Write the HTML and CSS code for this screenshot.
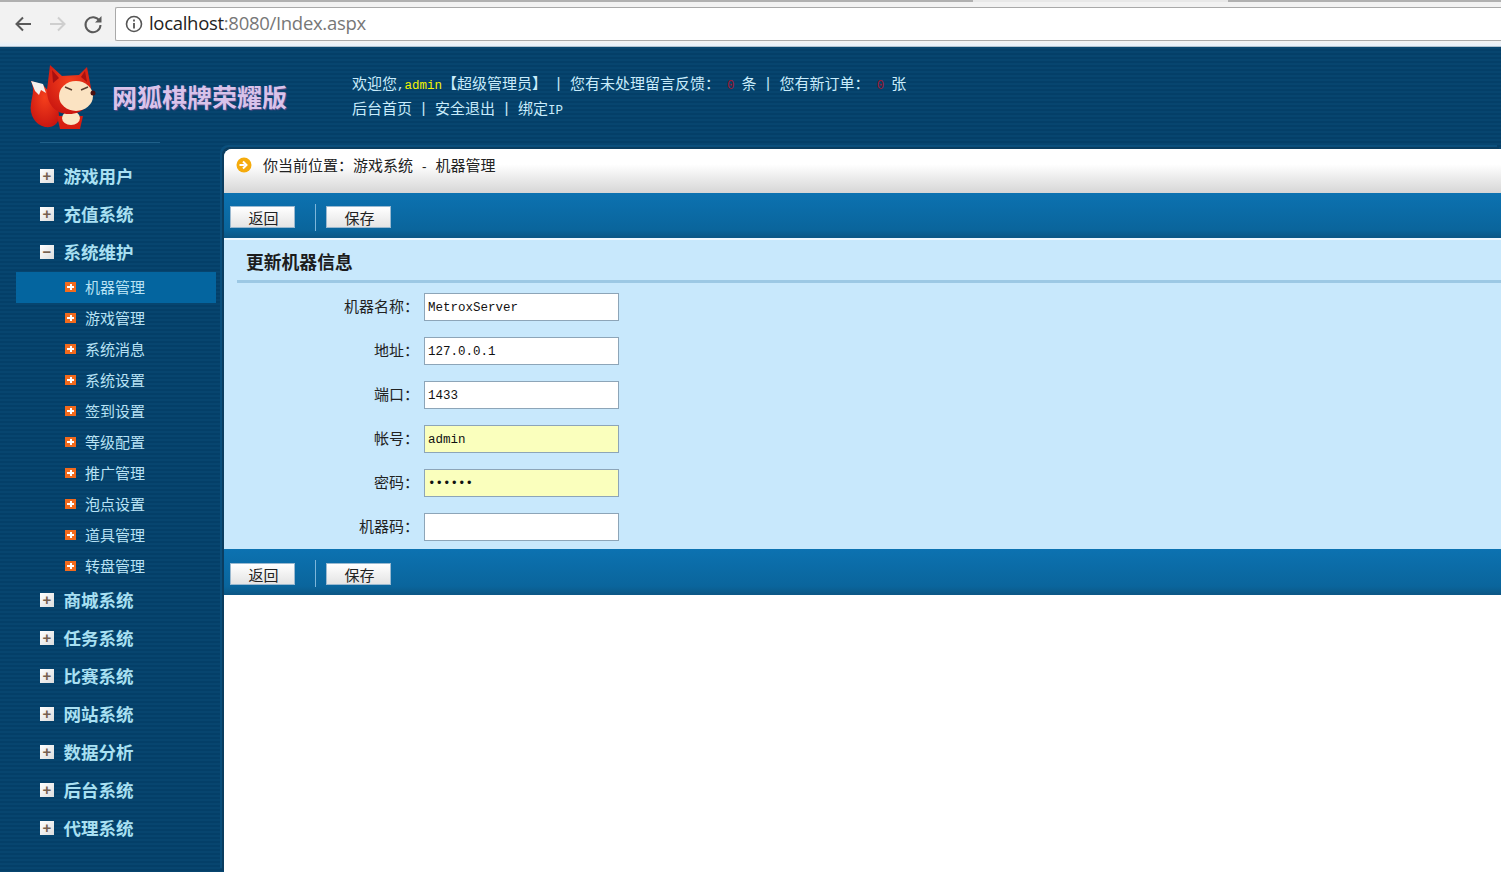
FILE: index.html
```html
<!DOCTYPE html>
<html lang="zh-CN">
<head>
<meta charset="utf-8">
<title>网狐棋牌荣耀版</title>
<link rel="stylesheet" href="styles.css">
</head>
<body>
<div class="browser">
  <div class="tabstrip"></div>
  <div class="navbar">
    <svg class="nav-icon" width="24" height="24" viewBox="0 0 24 24"><path d="M20 12H6M12 5.500 5.500 12l6.500 6.500" fill="none" stroke="#5a5a5a" stroke-width="2"/></svg>
    <svg class="nav-icon" width="24" height="24" viewBox="0 0 24 24"><path d="M4 12h14M12 5.500l6.500 6.500-6.500 6.500" fill="none" stroke="#cfcfcf" stroke-width="2"/></svg>
    <svg class="nav-icon" width="24" height="24" viewBox="0 0 24 24"><path d="M18.500 9A7.500 7.500 0 1 0 19.500 13" fill="none" stroke="#5a5a5a" stroke-width="2"/><path d="M20.500 4v6.500H14z" fill="#5a5a5a"/></svg>
    <div class="urlbox">
      <svg width="18" height="18" viewBox="0 0 18 18"><circle cx="9" cy="9" r="7.500" fill="none" stroke="#555" stroke-width="1.600"/><path d="M9 8v5.500M9 4.500v2" stroke="#555" stroke-width="1.800"/></svg>
      <span class="url"><span class="url-host">localhost</span>:8080/Index.aspx</span>
    </div>
  </div>
  <div class="navshade"></div>
</div>
<div class="app">
  <header class="top">
    <div class="brand">
      <svg class="fox" width="80" height="76" viewBox="0 0 80 76">
        <defs>
          <radialGradient id="hood" cx="0.5" cy="0.35" r="0.7"><stop offset="0" stop-color="#f5401c"/><stop offset="1" stop-color="#c81410"/></radialGradient>
        </defs>
        <path d="M6 23 18 27C24 34 34 44 34 58 34 66 28 70 20 69 10 67 4 56 6 46 7 38 10 32 6 23Z" fill="url(#hood)"/>
        <path d="M6 23 18 26 21 35 16 32 14 37 10 33Z" fill="#f4f0ec"/>
        <path d="M32 58h26l-3 13H35Z" fill="#d81e10"/>
        <ellipse cx="46" cy="60" rx="9" ry="7" fill="#fbe6c4"/>
        <path d="M25 7 37 18 54 17 62 9 66 30C68 46 58 56 44 56 30 56 22 46 22 32Z" fill="url(#hood)"/>
        <path d="M27 12 34 20 28 25ZM60 13 56 19 62 24Z" fill="#a81010"/>
        <ellipse cx="51" cy="38" rx="17" ry="15" fill="#fbe3c2"/>
        <path d="M40 29l7 3M63 29l-7 3" stroke="#5a4030" stroke-width="1.400" fill="none"/>
        <circle cx="68" cy="35" r="2.500" fill="#4a1010"/>
      </svg>
      <span class="brand-name">网狐棋牌荣耀版</span>
    </div>
    <div class="welcome">
      <p>欢迎您<span class="latin">,</span><span class="latin user">admin</span>【超级管理员】<span class="sep">|</span>您有未处理留言反馈：<span class="latin alert">0</span>条<span class="sep">|</span>您有新订单：<span class="latin alert">0</span>张</p>
      <p>后台首页<span class="sep">|</span>安全退出<span class="sep">|</span>绑定<span class="latin">IP</span></p>
    </div>
  </header>
  <div class="main">
    <nav class="side">
      <div class="side-rule"></div>
      <div class="menu"><span class="toggle">+</span>游戏用户</div>
      <div class="menu"><span class="toggle">+</span>充值系统</div>
      <div class="menu"><span class="toggle">−</span>系统维护</div>
      <ul class="sub">
        <li class="active"><i class="bullet"></i>机器管理</li>
        <li><i class="bullet"></i>游戏管理</li>
        <li><i class="bullet"></i>系统消息</li>
        <li><i class="bullet"></i>系统设置</li>
        <li><i class="bullet"></i>签到设置</li>
        <li><i class="bullet"></i>等级配置</li>
        <li><i class="bullet"></i>推广管理</li>
        <li><i class="bullet"></i>泡点设置</li>
        <li><i class="bullet"></i>道具管理</li>
        <li><i class="bullet"></i>转盘管理</li>
      </ul>
      <div class="menu"><span class="toggle">+</span>商城系统</div>
      <div class="menu"><span class="toggle">+</span>任务系统</div>
      <div class="menu"><span class="toggle">+</span>比赛系统</div>
      <div class="menu"><span class="toggle">+</span>网站系统</div>
      <div class="menu"><span class="toggle">+</span>数据分析</div>
      <div class="menu"><span class="toggle">+</span>后台系统</div>
      <div class="menu"><span class="toggle">+</span>代理系统</div>
    </nav>
    <section class="content">
      <div class="crumb">
        <svg width="16" height="16" viewBox="0 0 16 16"><circle cx="8" cy="8" r="7.500" fill="#f5ab0c"/><path d="M3.500 8h5M7 4.500 10.500 8 7 11.500" fill="none" stroke="#fff" stroke-width="2"/></svg>
        <span class="crumb-text">你当前位置：游戏系统<span class="latin"> - </span>机器管理</span>
      </div>
      <div class="toolbar">
        <button class="btn" type="button">返回</button>
        <span class="tool-sep"></span>
        <button class="btn" type="button">保存</button>
      </div>
      <form class="panel">
        <h2 class="panel-title">更新机器信息</h2>
        <div class="rows">
          <label class="row"><span class="row-label">机器名称：</span><input class="field" type="text" value="MetroxServer"></label>
          <label class="row"><span class="row-label">地址：</span><input class="field" type="text" value="127.0.0.1"></label>
          <label class="row"><span class="row-label">端口：</span><input class="field" type="text" value="1433"></label>
          <label class="row"><span class="row-label">帐号：</span><input class="field autofill" type="text" value="admin"></label>
          <label class="row"><span class="row-label">密码：</span><input class="field autofill" type="password" value="123456"></label>
          <label class="row"><span class="row-label">机器码：</span><input class="field" type="text" value=""></label>
        </div>
      </form>
      <div class="toolbar toolbar-end">
        <button class="btn" type="button">返回</button>
        <span class="tool-sep"></span>
        <button class="btn" type="button">保存</button>
      </div>
    </section>
  </div>
</div>
</body>
</html>
```

FILE: styles.css
```css
* { box-sizing: border-box; }
html, body { margin: 0; height: 100%; overflow: hidden; }
body {
  display: flex;
  flex-direction: column;
  height: 872px;
  font: 15px/1.2 "Noto Sans CJK SC", sans-serif;
  color: #222;
  background: #fff;
}
.latin { font-family: "Liberation Mono", monospace; font-size: 12.500px; white-space: pre; }

/* browser frame */
.browser { flex: none; height: 47px; background: #f2f2f2; }
.tabstrip {
  height: 7px;
  background: linear-gradient(90deg, #b0b0b0 973px, #e8e8e8 973px 1228px, #b0b0b0 1228px) top / 100% 2px no-repeat;
}
.navbar { display: flex; align-items: center; height: 34px; padding-left: 11px; }
.nav-icon { flex: none; margin-right: 11px; }
.nav-icon:nth-child(3) { margin-right: 10px; }
.urlbox {
  flex: 1;
  display: flex;
  align-items: center;
  gap: 6px;
  height: 34px;
  padding-left: 9px;
  background: #fff;
  border: 1px solid #a9a9a9;
  border-right: 0;
  border-radius: 2px 0 0 2px;
}
.url { margin-top: -2px; font: 18.500px/1 "Open Sans", sans-serif; color: #777; letter-spacing: -0.300px; }
.url-host { color: #222; }
.navshade { height: 6px; background: linear-gradient(#f2f2f2 0, #e6f0fa 80%, #8aa0b0 100%); }

/* application */
.app {
  flex: 1;
  min-height: 0;
  display: flex;
  flex-direction: column;
  background: repeating-linear-gradient(#07456f 0 2px, #043f68 2px 4px);
  color: #c9ecfb;
}
.top { flex: none; display: flex; height: 95px; }
.brand { flex: none; width: 352px; display: flex; align-items: flex-start; padding: 11px 0 0 25px; }
.fox { flex: none; }
.brand-name {
  margin: 23px 0 0 7px;
  font: bold 25px/1.2 "Noto Sans CJK SC", sans-serif;
  color: #d9c2ea;
  text-shadow: 1px 1px 1px #5a4f88;
}
.welcome { padding-top: 27px; }
.welcome p { height: 18px; margin: 0 0 7px; line-height: 18px; }
.user { color: #f4f400; }
.alert { color: #a01830; padding: 0 7px; }
.sep { display: inline-block; width: 23px; height: 18px; vertical-align: top; text-align: center; font: 15px/22px "Liberation Mono", monospace; }

.main { flex: 1; min-height: 0; display: flex; }
.side { flex: none; width: 224px; padding: 0 8px 0 16px; }
.side-rule {
  width: 120px;
  height: 1px;
  margin: 0 0 14px 24px;
  background: #1f5f88;
}
.menu {
  display: flex;
  align-items: center;
  height: 38px;
  padding-left: 24px;
  font: bold 17.500px/1 "Noto Sans CJK SC", serif;
  color: #a9e0f2;
}
.toggle {
  flex: none;
  width: 14px;
  height: 14px;
  margin-right: 9.500px;
  background: linear-gradient(135deg, #fff, #ddd);
  color: #76604f;
  font: bold 15px/13px "Liberation Sans", sans-serif;
  text-align: center;
}
.sub { margin: 1px 0 -1px; padding: 0; list-style: none; }
.sub li {
  display: flex;
  align-items: center;
  height: 31px;
  padding: 0 0 2px 49px;
  color: #b8e2f4;
}
.sub li.active { background: #04659f; }
.bullet {
  flex: none;
  width: 11px;
  height: 10px;
  margin: 1px 9px 0 0;
  background:
    linear-gradient(#fff, #fff) center / 7px 2px no-repeat,
    linear-gradient(#fff, #fff) center / 2px 6px no-repeat,
    #f36a1c;
}

/* content */
.content {
  flex: 1;
  min-width: 0;
  margin-top: 7px;
  display: flex;
  flex-direction: column;
  color: #222;
  background: #fff;
  border-radius: 8px 0 0 0;
  box-shadow: -2px -2px 0 #0a3d60, -4px -4px 0 #0b4f7c;
}
.crumb {
  flex: none;
  display: flex;
  align-items: flex-start;
  gap: 11px;
  height: 44px;
  padding: 8px 0 0 12px;
  border-radius: 8px 0 0 0;
  background: linear-gradient(#fff 35%, #d6d6d6 100%);
}
.crumb-text { margin-top: -1px; }
.toolbar {
  flex: none;
  display: flex;
  align-items: center;
  height: 45px;
  padding: 5px 0 0 6px;
  background: linear-gradient(#0c72b1, #0a659c 85%, #0b5a8a 100%);
  border-bottom: 2px solid #0c5887;
}
.toolbar-end { height: 46px; }
.btn {
  width: 65px;
  height: 22px;
  padding: 2px 0 0 2px;
  border: 1px solid #9ab9d0;
  background: linear-gradient(#fff, #e4e4e4);
  color: #222;
  font: 15px/18px "Noto Sans CJK SC", sans-serif;
}
.tool-sep { width: 1px; height: 27px; margin: 0 10px 0 20px; background: #7db6da; }
.panel { flex: none; height: 311px; padding: 0 0 0 13px; background: #c8e8fc; border-top: 2px solid #f0f8fe; }
.panel-title {
  margin: 0;
  height: 43px;
  padding: 11px 0 0 9px;
  font: bold 17.800px/20px "Noto Sans CJK SC", sans-serif;
  color: #1c1c1c;
  border-bottom: 3px solid #9cc8e4;
}
.rows { padding-top: 10px; }
.row { display: flex; align-items: center; height: 28px; margin-bottom: 16px; }
.row-label { flex: none; width: 182px; padding-bottom: 2px; text-align: right; color: #222; }
.field {
  width: 195px;
  height: 28px;
  margin-left: 5px;
  padding: 2px 3px 0;
  border: 1px solid #8da5b8;
  background: #fff;
  color: #111;
  font: 12.500px "Liberation Mono", monospace;
  outline: 0;
}
.autofill { background: #faffbd; }
```
